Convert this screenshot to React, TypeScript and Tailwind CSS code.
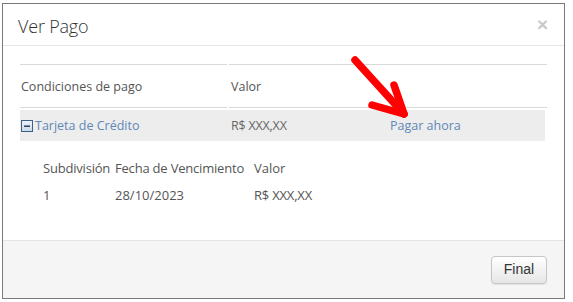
import React from "react";

const font = { fontFamily: '"Open Sans", "Noto Sans", sans-serif' };

function MinusBox() {
  return (
    <svg width="12" height="12" viewBox="0 0 12 12" className="shrink-0">
      <defs>
        <linearGradient id="mb" x1="0" y1="0" x2="0" y2="1">
          <stop offset="0" stopColor="#eef4fb" />
          <stop offset="1" stopColor="#c9d8ea" />
        </linearGradient>
      </defs>
      <rect x="0.5" y="0.5" width="11" height="11" fill="url(#mb)" stroke="#3e5f86" />
      <rect x="3" y="5.5" width="6" height="1.4" fill="#1f3550" />
    </svg>
  );
}

export default function App() {
  return (
    <div className="w-[573px] h-[302px] bg-white pt-[3px] pl-[2px]" style={font}>
      <div className="w-[563px] h-[296px] border border-[#7a7a7a] flex flex-col bg-white">
        <div className="h-[42px] border-b border-[#e5e5e5] flex items-center justify-between pl-[15px] pr-[16px] pt-[3px]">
          <span className="text-[18px] text-[#333] font-light tracking-[-0.2px]">Ver Pago</span>
          <span className="text-[19px] leading-none font-bold text-[#c8c8c8] -mt-[3px]" style={{ fontFamily: '"Liberation Sans", Arial, sans-serif' }}>×</span>
        </div>
        <div className="flex-1 relative pl-[17px] pr-[16px] pt-[18px]">
          <div className="flex gap-[2px]">
            <div className="w-[207px] h-[44px] border-t border-b border-[#d9d9d9] flex items-center pl-[1px] pt-[2px] text-[12.5px] text-[#555]">
              Condiciones de pago
            </div>
            <div className="w-[318px] h-[44px] border-t border-b border-[#d9d9d9] flex items-center pl-[2px] pt-[2px] text-[12.5px] text-[#555]">
              Valor
            </div>
          </div>
          <div className="mt-[2px] h-[31px] w-[525px] bg-[#ededed] flex items-center text-[12.5px] pt-[1px]">
            <div className="w-[209px] flex items-center gap-[2px] pl-[1px] text-[#6088b6]">
              <MinusBox />
              <span>Tarjeta de Crédito</span>
            </div>
            <div className="w-[161px] pl-[2px] text-[#666] tracking-[-0.2px]">R$ XXX,XX</div>
            <div className="text-[#6088b6]">Pagar ahora</div>
          </div>
          <div className="pl-[23px] pt-[15px] text-[13px] text-[#555]">
            <div className="flex h-[26px] items-center">
              <span className="w-[72px] tracking-[-0.2px]">Subdivisión</span>
              <span className="w-[139px] tracking-[-0.2px]">Fecha de Vencimiento</span>
              <span>Valor</span>
            </div>
            <div className="flex h-[28px] items-center">
              <span className="w-[72px]">1</span>
              <span className="w-[139px]">28/10/2023</span>
              <span className="tracking-[-0.2px]">R$ XXX,XX</span>
            </div>
          </div>
          <svg className="absolute left-[343px] top-[7px]" width="72" height="68" viewBox="0 0 72 68">
            <g stroke="#ff0000" strokeWidth="7.5" strokeLinecap="round" strokeLinejoin="round" fill="none">
              <path d="M9 7 L58 61" />
              <path d="M48 32 L58 61 L26 52" />
            </g>
          </svg>
        </div>
        <div className="h-[58px] bg-[#f5f5f5] border-t border-[#e5e5e5] flex items-center justify-end pr-[17px]">
          <button
            className="h-[28px] w-[56px] rounded-[4px] border border-[#c6c6c6] bg-gradient-to-b from-[#ffffff] to-[#e6e6e6] text-[14px] text-[#333] shadow-[0_1px_1px_rgba(0,0,0,0.08)]"
            style={{ fontFamily: '"Liberation Sans", Arial, sans-serif' }}
          >
            Final
          </button>
        </div>
      </div>
    </div>
  );
}
